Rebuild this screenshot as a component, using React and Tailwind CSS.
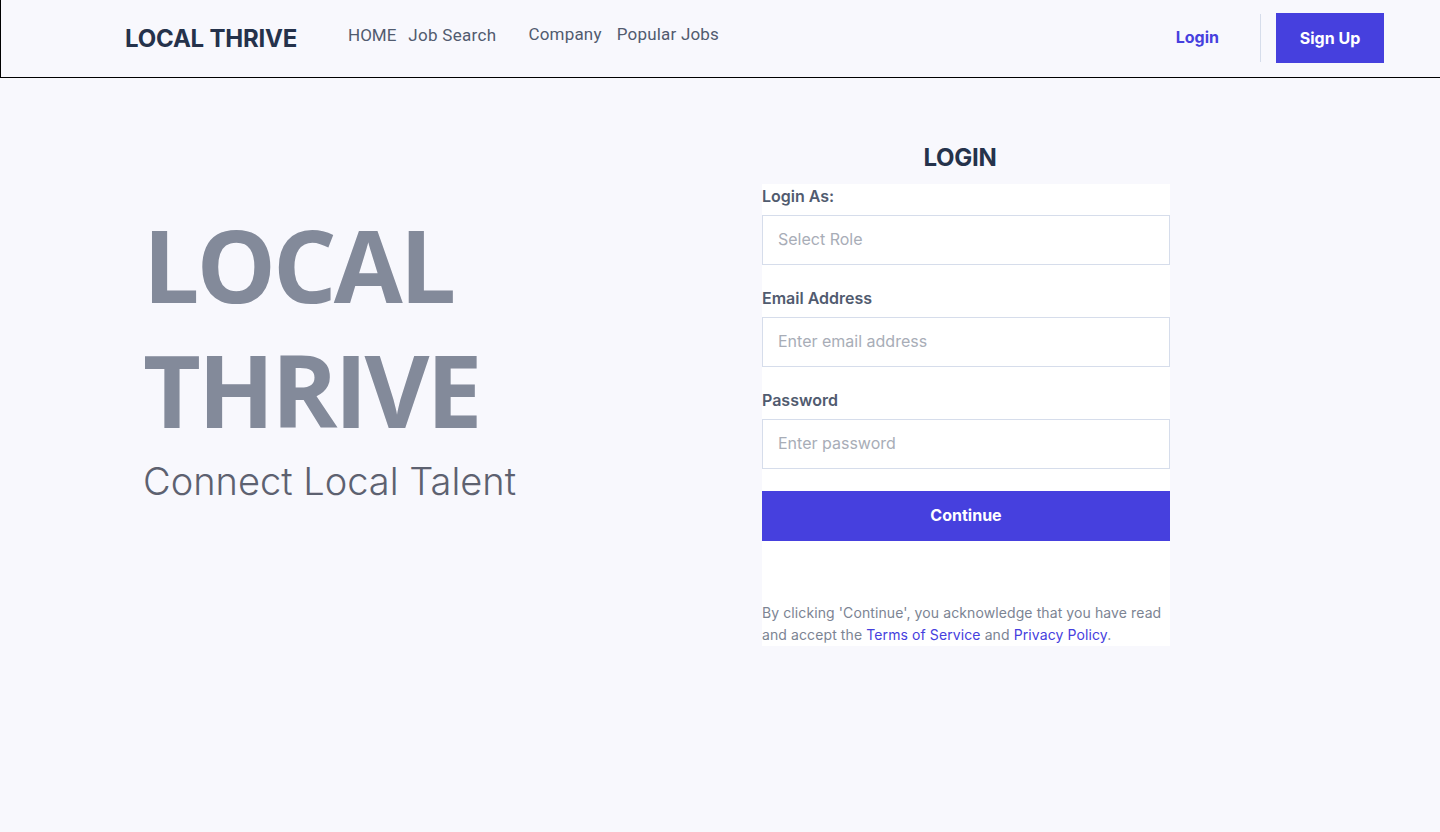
export default function App() {
  return (
    <div className="min-h-screen bg-[#f8f8fd] font-['Inter',sans-serif]">
      <header className="h-[78px] border-l border-b border-black flex items-center">
        <div className="pl-[124px] w-[347px] text-[24px] font-bold tracking-[-0.2px] text-[#25324b] mt-[1px]">LOCAL THRIVE</div>
        <nav className="flex items-center font-['Roboto',sans-serif] text-[17px] text-[#515b6f] -mt-[6px]">
          <a className="mr-[12px]">HOME</a>
          <a className="mr-[32px] tracking-[0.3px]">Job Search</a>
          <a className="mr-[15px] -mt-[2px] tracking-[0.2px]">Company</a>
          <a className="-mt-[2px] tracking-[0.2px]">Popular Jobs</a>
        </nav>
        <div className="ml-auto flex items-center pr-[56px] -mt-[2px]">
          <a className="text-[16px] font-bold text-[#4640de] mr-[41px] -mt-[1px]">Login</a>
          <div className="w-px h-[48px] bg-[#d6ddeb] mr-[15px]" />
          <button className="w-[108px] h-[50px] bg-[#4640de] text-white text-[16px] font-bold">Sign Up</button>
        </div>
      </header>

      <main className="flex pt-[64px]">
        <div className="w-[762px] pl-[143px] pt-[60px]">
          <h1 className="font-['Open_Sans',sans-serif] font-bold text-[100px] leading-[125px] tracking-[-3px] text-[#838a9a]">
            LOCAL
            <br />
            THRIVE
          </h1>
          <p className="text-[38px] font-light text-[#5d6170] leading-[46px] mt-[6px]">Connect Local Talent</p>
        </div>

        <div className="w-[408px]">
          <h2 className="text-[24px] font-bold text-[#25324b] text-center pr-[12px] leading-[32px] tracking-[-0.3px]">LOGIN</h2>
          <form className="bg-white mt-[11px]">
            <label className="block text-[16px] font-semibold text-[#515b6f] leading-[24px] -mt-[1px]">Login As:</label>
            <div className="mt-[7px] h-[50px] border border-[#d6ddeb] flex items-center px-[15px] pb-[3px] text-[16px] text-[#a8adb7]">Select Role</div>
            <label className="block text-[16px] font-semibold text-[#515b6f] leading-[24px] mt-[21px]">Email Address</label>
            <input className="mt-[7px] w-full h-[50px] border border-[#d6ddeb] px-[15px] pb-[3px] text-[16px] placeholder:text-[#a8adb7] outline-none" placeholder="Enter email address" />
            <label className="block text-[16px] font-semibold text-[#515b6f] leading-[24px] mt-[21px]">Password</label>
            <input type="password" className="mt-[7px] w-full h-[50px] border border-[#d6ddeb] px-[15px] pb-[3px] text-[16px] placeholder:text-[#a8adb7] outline-none" placeholder="Enter password" />
            <button type="button" className="mt-[22px] w-full h-[50px] bg-[#4640de] text-white text-[16px] font-bold pb-[3px]">Continue</button>
            <p className="mt-[61px] text-[14px] leading-[22px] text-[#7c8493] tracking-[0.1px]">
              By clicking 'Continue', you acknowledge that you have read and accept the{" "}
              <a className="text-[#4640de]">Terms of Service</a> and <a className="text-[#4640de]">Privacy Policy</a>.
            </p>
          </form>
        </div>
      </main>
    </div>
  );
}
